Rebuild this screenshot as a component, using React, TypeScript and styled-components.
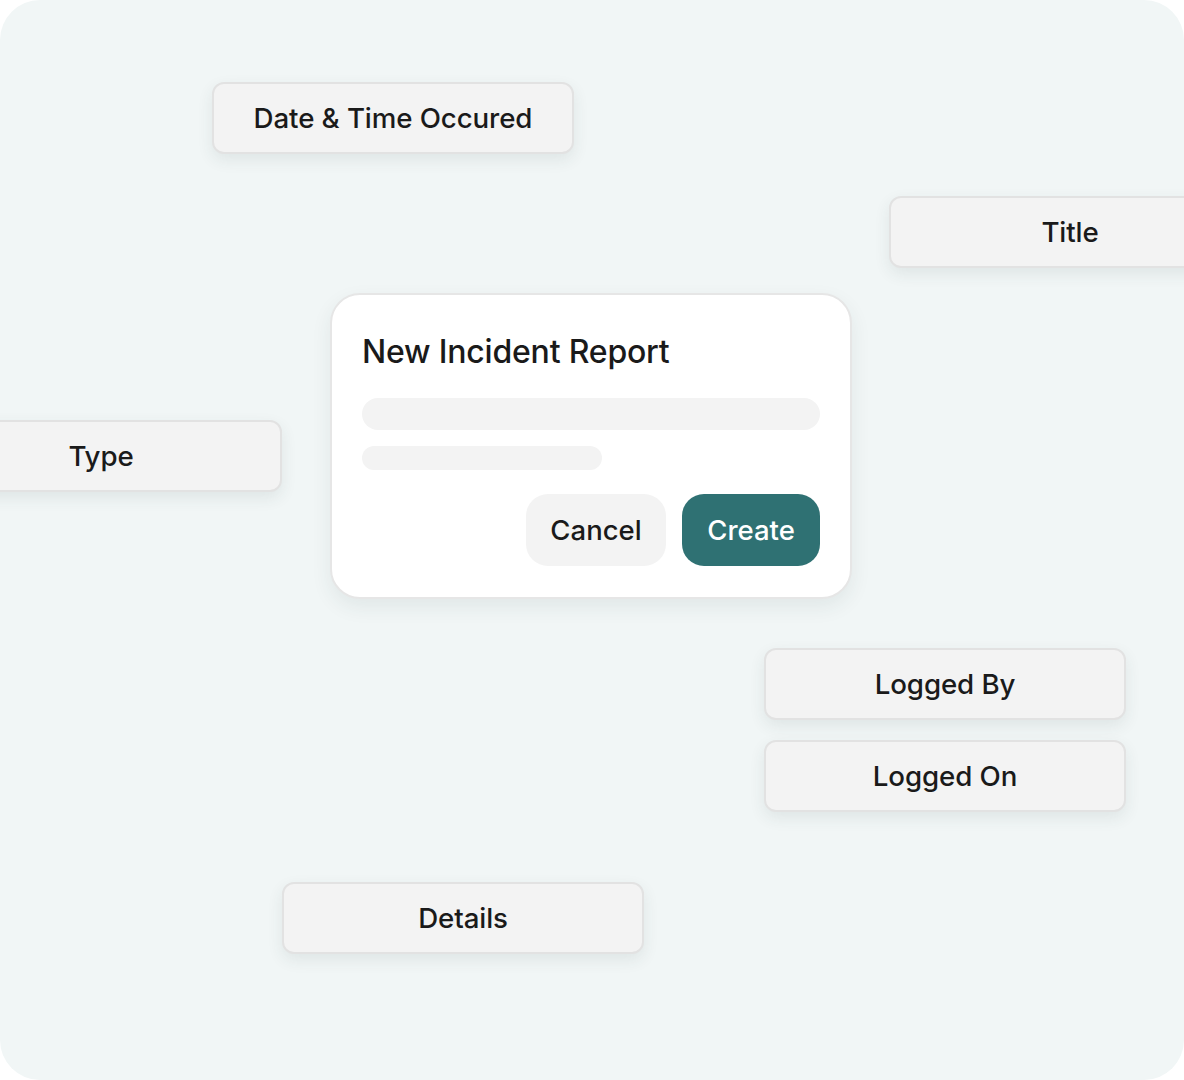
import React from "react";
import styled, { createGlobalStyle } from "styled-components";

const Global = createGlobalStyle`
  html, body { margin: 0; padding: 0; background: #ffffff; }
  body { font-family: Inter, "Noto Sans", "Liberation Sans", sans-serif; }
  * { box-sizing: border-box; }
`;

const Canvas = styled.div`
  position: relative;
  width: 1184px;
  height: 1080px;
  background: #f1f6f6;
  border-radius: 40px;
  overflow: hidden;
`;

const Tag = styled.div<{ $x: number; $y: number }>`
  position: absolute;
  left: ${(p) => p.$x}px;
  top: ${(p) => p.$y}px;
  width: 362px;
  height: 72px;
  display: flex;
  align-items: center;
  justify-content: center;
  background: #f3f3f3;
  border: 2px solid #e2e2e2;
  border-radius: 12px;
  box-shadow: 0 6px 16px rgba(40, 70, 70, 0.09);
  font-size: 27.7px;
  font-weight: 500;
  color: #1a1a1a;
  letter-spacing: -0.1px;
`;

const Dialog = styled.div`
  position: absolute;
  left: 330px;
  top: 293px;
  width: 522px;
  height: 306px;
  background: #ffffff;
  border: 2px solid #e6e6e6;
  border-radius: 30px;
  box-shadow: 0 8px 20px rgba(40, 70, 70, 0.08);
  padding: 30px 30px 30px 30px;
  display: flex;
  flex-direction: column;
`;

const DialogTitle = styled.h2`
  margin: 0;
  font-size: 32px;
  font-weight: 500;
  color: #1a1a1a;
  line-height: 54px;
  letter-spacing: -0.2px;
`;

const Skeleton = styled.div<{ $w: number; $h: number; $mt: number }>`
  width: ${(p) => p.$w}px;
  height: ${(p) => p.$h}px;
  margin-top: ${(p) => p.$mt}px;
  background: #f3f3f3;
  border-radius: ${(p) => p.$h / 2}px;
`;

const Actions = styled.div`
  display: flex;
  justify-content: flex-end;
  gap: 16px;
  margin-top: 24px;
  width: 458px;
`;

const Button = styled.button<{ $primary?: boolean }>`
  height: 72px;
  padding: 0 24px;
  width: ${(p) => (p.$primary ? 138 : 140)}px;
  border: none;
  border-radius: 22px;
  font-family: inherit;
  font-size: 27.5px;
  font-weight: 500;
  background: ${(p) => (p.$primary ? "#2f7173" : "#f3f3f3")};
  color: ${(p) => (p.$primary ? "#ffffff" : "#1a1a1a")};
  cursor: pointer;
`;

const tags: { label: string; x: number; y: number }[] = [
  { label: "Date & Time Occured", x: 212, y: 82 },
  { label: "Title", x: 889, y: 196 },
  { label: "Type", x: -80, y: 420 },
  { label: "Logged By", x: 764, y: 648 },
  { label: "Logged On", x: 764, y: 740 },
  { label: "Details", x: 282, y: 882 },
];

export default function App() {
  return (
    <>
      <Global />
      <Canvas>
        {tags.map((t) => (
          <Tag key={t.label} $x={t.x} $y={t.y}>
            {t.label}
          </Tag>
        ))}
        <Dialog>
          <DialogTitle>New Incident Report</DialogTitle>
          <Skeleton $w={458} $h={32} $mt={19} />
          <Skeleton $w={240} $h={24} $mt={16} />
          <Actions>
            <Button>Cancel</Button>
            <Button $primary>Create</Button>
          </Actions>
        </Dialog>
      </Canvas>
    </>
  );
}
